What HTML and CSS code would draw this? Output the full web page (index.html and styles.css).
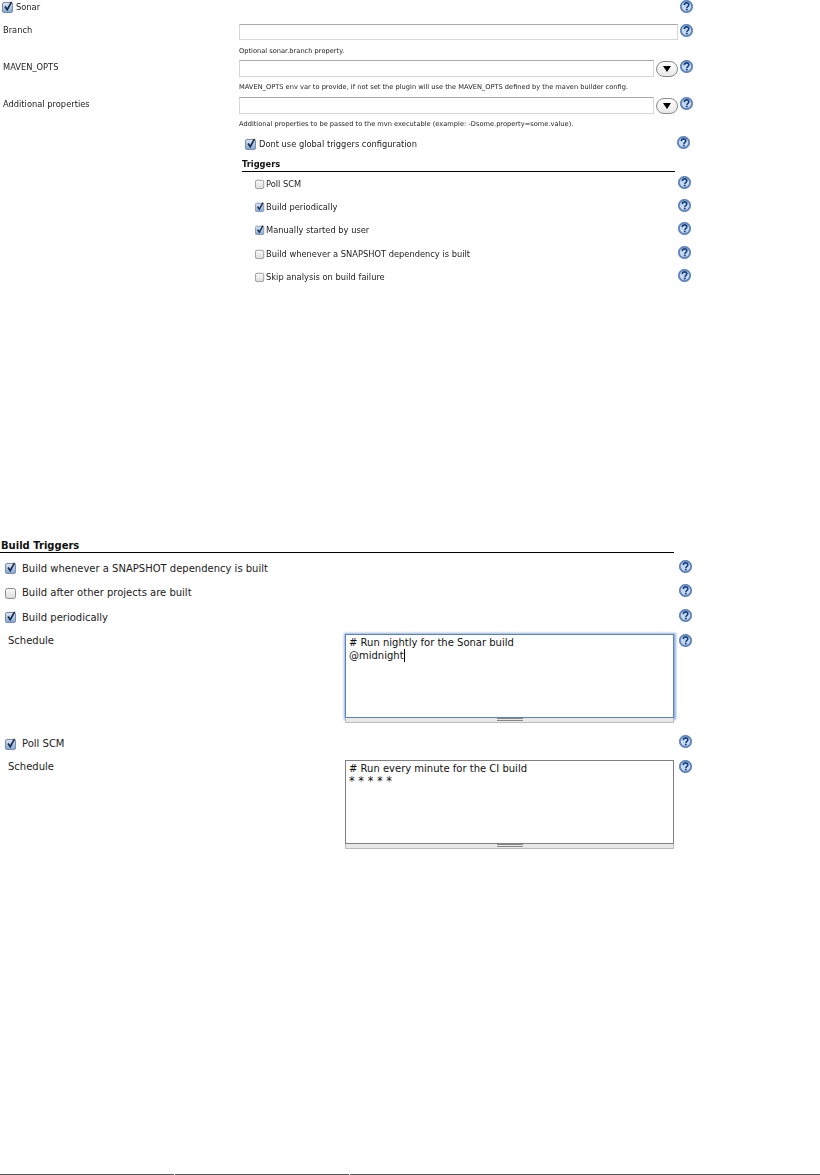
FILE: index.html
```html
<!DOCTYPE html>
<html lang="en">
<head>
<meta charset="utf-8">
<title>Sonar configuration</title>
<link rel="stylesheet" href="styles.css">
</head>
<body>
<svg class="defs" width="0" height="0" aria-hidden="true">
  <defs>
    <linearGradient id="boxFill" x1="0" y1="0" x2="0" y2="1">
      <stop offset="0" stop-color="#dfe7f3"/><stop offset="1" stop-color="#7fa6d8"/>
    </linearGradient>
    <linearGradient id="boxOff" x1="0" y1="0" x2="0" y2="1">
      <stop offset="0" stop-color="#fafafa"/><stop offset="1" stop-color="#dcdcdc"/>
    </linearGradient>
    <symbol id="help" viewBox="0 0 13 13">
      <circle cx="6.5" cy="6.5" r="6.2" fill="#5f86bd" stroke="#3f6aa8" stroke-width=".6"/>
      <circle cx="6.5" cy="6.5" r="4.7" fill="#c9d9ee"/>
      <path d="M4.3 5.1C4.4 3.6 5.4 2.9 6.6 2.9c1.3 0 2.2.8 2.2 1.9 0 1.7-1.9 1.7-1.9 3.2" fill="none" stroke="#123f80" stroke-width="1.6"/>
      <rect x="5.9" y="8.7" width="1.8" height="1.7" fill="#123f80"/>
    </symbol>
    <symbol id="on" viewBox="0 0 12 12">
      <rect x=".5" y="1.5" width="10" height="10" rx="1.5" fill="url(#boxFill)" stroke="#7b8ca6"/>
      <path d="M3 5.6l2.2 3L9.6 .8" fill="none" stroke="#1d2b45" stroke-width="1.7"/>
    </symbol>
    <symbol id="off" viewBox="0 0 12 12">
      <rect x=".5" y="1.5" width="10" height="10" rx="2" fill="url(#boxOff)" stroke="#8c8c8c"/>
    </symbol>
  </defs>
</svg>

<main class="page">
  <section class="sonar">
    <div class="row row-sonar">
      <svg class="cb"><use href="#on"/></svg>
      <span class="head-label">Sonar</span>
      <svg class="help help-top"><use href="#help"/></svg>
    </div>

    <div class="row row-field first-field">
      <span class="field-label">Branch</span>
      <div class="input input-wide"></div>
      <svg class="help"><use href="#help"/></svg>
    </div>
    <p class="desc">Optional sonar.branch property.</p>

    <div class="row row-field">
      <span class="field-label">MAVEN_OPTS</span>
      <div class="input"></div>
      <span class="drop"><i class="tri"></i></span>
      <svg class="help"><use href="#help"/></svg>
    </div>
    <p class="desc">MAVEN_OPTS env var to provide, if not set the plugin will use the MAVEN_OPTS defined by the maven builder config.</p>

    <div class="row row-field">
      <span class="field-label">Additional properties</span>
      <div class="input"></div>
      <span class="drop"><i class="tri"></i></span>
      <svg class="help"><use href="#help"/></svg>
    </div>
    <p class="desc">Additional properties to be passed to the mvn executable (example: -Dsome.property=some.value).</p>

    <div class="row row-global">
      <svg class="cb"><use href="#on"/></svg>
      <span class="global-label">Dont use global triggers configuration</span>
      <svg class="help"><use href="#help"/></svg>
    </div>

    <h3 class="sub-head">Triggers</h3>
    <ul class="triggers">
      <li><svg class="cb-s"><use href="#off"/></svg><span>Poll SCM</span><svg class="help"><use href="#help"/></svg></li>
      <li><svg class="cb-s"><use href="#on"/></svg><span>Build periodically</span><svg class="help"><use href="#help"/></svg></li>
      <li><svg class="cb-s"><use href="#on"/></svg><span>Manually started by user</span><svg class="help"><use href="#help"/></svg></li>
      <li><svg class="cb-s"><use href="#off"/></svg><span>Build whenever a SNAPSHOT dependency is built</span><svg class="help"><use href="#help"/></svg></li>
      <li><svg class="cb-s"><use href="#off"/></svg><span>Skip analysis on build failure</span><svg class="help"><use href="#help"/></svg></li>
    </ul>
  </section>

  <section class="build">
    <h2 class="main-head">Build Triggers</h2>
    <div class="b-row b-first"><svg class="cb-b"><use href="#on"/></svg><span>Build whenever a SNAPSHOT dependency is built</span><svg class="help"><use href="#help"/></svg></div>
    <div class="b-row"><svg class="cb-b"><use href="#off"/></svg><span>Build after other projects are built</span><svg class="help"><use href="#help"/></svg></div>
    <div class="b-row"><svg class="cb-b"><use href="#on"/></svg><span>Build periodically</span><svg class="help"><use href="#help"/></svg></div>
    <div class="sched">
      <span class="sched-label">Schedule</span>
      <div class="area-wrap">
        <div class="area focused"># Run nightly for the Sonar build<br>@midnight<i class="caret"></i></div>
        <div class="grip"><i></i></div>
      </div>
      <svg class="help"><use href="#help"/></svg>
    </div>
    <div class="b-row poll"><svg class="cb-b"><use href="#on"/></svg><span>Poll SCM</span><svg class="help"><use href="#help"/></svg></div>
    <div class="sched sched-poll">
      <span class="sched-label">Schedule</span>
      <div class="area-wrap">
        <div class="area"># Run every minute for the CI build<br><span class="stars">* * * * *</span></div>
        <div class="grip"><i></i></div>
      </div>
      <svg class="help"><use href="#help"/></svg>
    </div>
  </section>
</main>

<footer class="foot"><i></i><i></i><i></i></footer>
</body>
</html>
```

FILE: styles.css
```css
html, body { margin: 0; padding: 0; background: #fff; }
body {
  width: 820px;
  height: 1175px;
  overflow: hidden;
  display: flex;
  flex-direction: column;
  font-family: "DejaVu Sans", Verdana, sans-serif;
  color: #222;
}
.defs { display: block; height: 0; }
.page { flex: 1; }
svg.help { width: 13px; height: 13px; flex: none; }

.sonar { height: 296px; font-size: 8.3px; filter: blur(.3px); }
.row { display: flex; align-items: center; }
.row-sonar { height: 14px; padding-left: 2px; }
.cb { width: 12px; height: 12px; flex: none; }
.head-label { margin-left: 2px; flex: 1; }
.help-top { margin-right: 127px; margin-top: -2px; }

.row-field { height: 18px; align-items: flex-start; }
.first-field { margin-top: 10px; height: 17px; }
.field-label { width: 236px; margin-left: 3px; flex: none; line-height: 15px; }
.first-field .field-label { line-height: 12px; }
.input {
  width: 413px;
  height: 15px;
  flex: none;
  background: #fff;
  border: 1px solid #d6d6d6;
  border-top: 1px solid #a8a8a8;
  box-sizing: content-box;
}
.input-wide { width: 437px; height: 14px; margin-right: 2px; }
.drop {
  width: 20px;
  height: 14px;
  margin: 1px 2px 0 2px;
  flex: none;
  display: flex;
  align-items: center;
  justify-content: center;
  border: 1px solid #888;
  border-radius: 8px;
  background: linear-gradient(#fff, #e8e8e8);
}
.tri { width: 0; height: 0; border: 4px solid transparent; border-top: 6px solid #000; border-bottom: 0; }
.desc {
  margin: 0 0 0 239px;
  height: 19px;
  line-height: 19px;
  font-size: 6.67px;
  white-space: nowrap;
}
.first-field + .desc { line-height: 20px; }

.row-global { height: 14px; margin-top: 3px; padding-left: 245px; }
.global-label { margin-left: 2px; width: 418px; }
.row-global .help { margin-top: -4px; }

.sub-head {
  margin: 7px 0 0 242px;
  width: 433px;
  height: 14px;
  line-height: 13px;
  font-size: 8.3px;
  font-weight: bold;
  border-bottom: 1px solid #000;
  box-sizing: border-box;
  color: #111;
}
.triggers { list-style: none; margin: 0; padding: 0 0 0 255px; }
.triggers li { display: flex; align-items: center; height: 23.3px; }
.cb-s { width: 10px; height: 10px; flex: none; }
.triggers span { margin-left: 1px; width: 412px; white-space: nowrap; }
.triggers .help { margin-top: -3px; }

.build { margin-top: 244px; font-size: 10px; }
.main-head {
  margin: 0;
  width: 674px;
  height: 13px;
  line-height: 12px;
  padding-left: 1px;
  box-sizing: border-box;
  font-size: 10px;
  font-weight: bold;
  border-bottom: 1px solid #000;
  color: #111;
}
.b-row { display: flex; align-items: center; height: 24.5px; padding-left: 5px; }
.b-first { margin-top: 3px; }
.cb-b { width: 12px; height: 12px; flex: none; }
.b-row span { margin-left: 5px; width: 657px; white-space: nowrap; }
.b-row .help { margin-top: -4px; }
.poll { margin-top: 5px; }

.sched { display: flex; align-items: flex-start; height: 93px; margin-top: 4px; }
.sched-label { width: 337px; margin: 1px 0 0 8px; flex: none; line-height: 12px; }
.area-wrap { width: 329px; flex: none; }
.area {
  height: 84px;
  border: 1px solid #808080;
  background: #fff;
  padding: 1px 3px;
  box-sizing: border-box;
  font-size: 10px;
  line-height: 13px;
  color: #111;
}
.stars { font-size: 11.4px; }
.area.focused {
  border-color: #5f83b3;
  box-shadow: 0 0 2px 1.5px #8fb2e0;
}
.caret { display: inline-block; width: 1px; height: 13px; background: #000; vertical-align: top; }
.grip {
  height: 5px;
  background: #e8e8e8;
  border: 1px solid #bdbdbd;
  border-top: 0;
  box-sizing: border-box;
  display: flex;
  justify-content: center;
}
.grip i { width: 26px; height: 3px; border-top: 1px solid #888; border-bottom: 1px solid #888; box-sizing: border-box; }
.sched .help { margin-left: 5px; }

.foot { display: flex; gap: 1px; height: 1px; flex: none; }
.foot i { width: 174px; background: #555; }
.foot i:last-child { flex: 1; }
```
